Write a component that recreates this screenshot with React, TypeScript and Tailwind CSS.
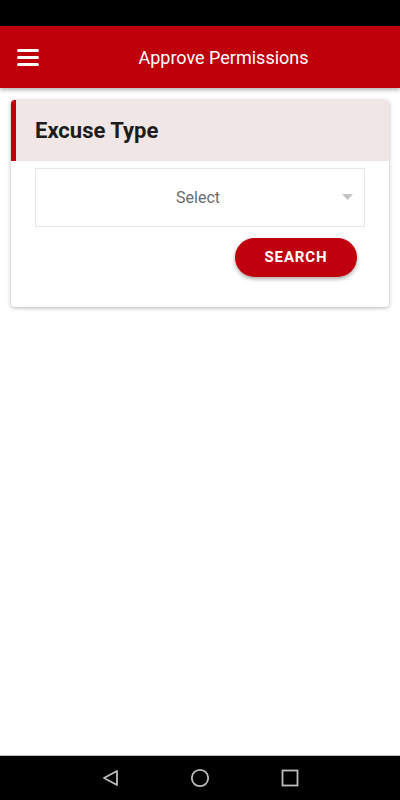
const App = () => {
  return (
    <div
      className="flex h-[800px] w-[400px] flex-col bg-white"
      style={{ fontFamily: "Roboto, 'Liberation Sans', sans-serif" }}
    >
      <div className="h-[26px] bg-black" />

      <div className="relative z-10 flex h-[62px] items-center bg-[#be000b] shadow-[0_2px_4px_rgba(0,0,0,0.3)]">
        <button className="ml-[17px] flex w-[22px] flex-col gap-[4px]">
          <span className="h-[3px] w-full rounded-sm bg-white" />
          <span className="h-[3px] w-full rounded-sm bg-white" />
          <span className="h-[3px] w-full rounded-sm bg-white" />
        </button>
        <h1 className="flex-1 pl-[8px] text-center text-[18px] text-white">
          Approve Permissions
        </h1>
      </div>

      <div className="flex-1 px-[11px] pt-[12px]">
        <div className="overflow-hidden rounded-[4px] bg-white shadow-[0_1px_4px_rgba(0,0,0,0.3)]">
          <div className="flex h-[61px] items-center border-l-[5px] border-[#c0000c] bg-[#efe6e5] pl-[19px]">
            <h2 className="text-[22px] font-bold text-[#1c1c1c]">Excuse Type</h2>
          </div>

          <div className="px-[24px] pt-[7px] pb-[30px]">
            <div className="relative flex h-[59px] items-center justify-center border border-[#e6e6e6]">
              <span className="pr-[4px] text-[16px] text-[#6b6b6b]">Select</span>
              <svg
                className="absolute right-[11px] top-[25px]"
                width="11"
                height="6"
                viewBox="0 0 11 6"
              >
                <path d="M0 0h11L5.5 6z" fill="#c4c4c4" />
              </svg>
            </div>

            <div className="mt-[11px] flex justify-end pr-[8px]">
              <button className="h-[39px] w-[122px] rounded-full bg-[#c0000c] text-[15px] font-bold tracking-[0.06em] text-white shadow-[0_2px_4px_rgba(0,0,0,0.35)]">
                SEARCH
              </button>
            </div>
          </div>
        </div>
      </div>

      <div className="flex h-[45px] items-center justify-center gap-[71px] border-t border-[#bdbdbd] bg-black">
        <svg width="18" height="18" viewBox="0 0 18 18">
          <path
            d="M16 2v14L3 9z"
            fill="none"
            stroke="#bdbdbd"
            strokeWidth="1.8"
            strokeLinejoin="round"
          />
        </svg>
        <svg width="20" height="20" viewBox="0 0 20 20">
          <circle cx="10" cy="10" r="8.2" fill="none" stroke="#bdbdbd" strokeWidth="1.8" />
        </svg>
        <svg width="18" height="18" viewBox="0 0 18 18">
          <rect x="1.5" y="1.5" width="15" height="15" fill="none" stroke="#bdbdbd" strokeWidth="1.8" />
        </svg>
      </div>
    </div>
  );
};

export default App;
